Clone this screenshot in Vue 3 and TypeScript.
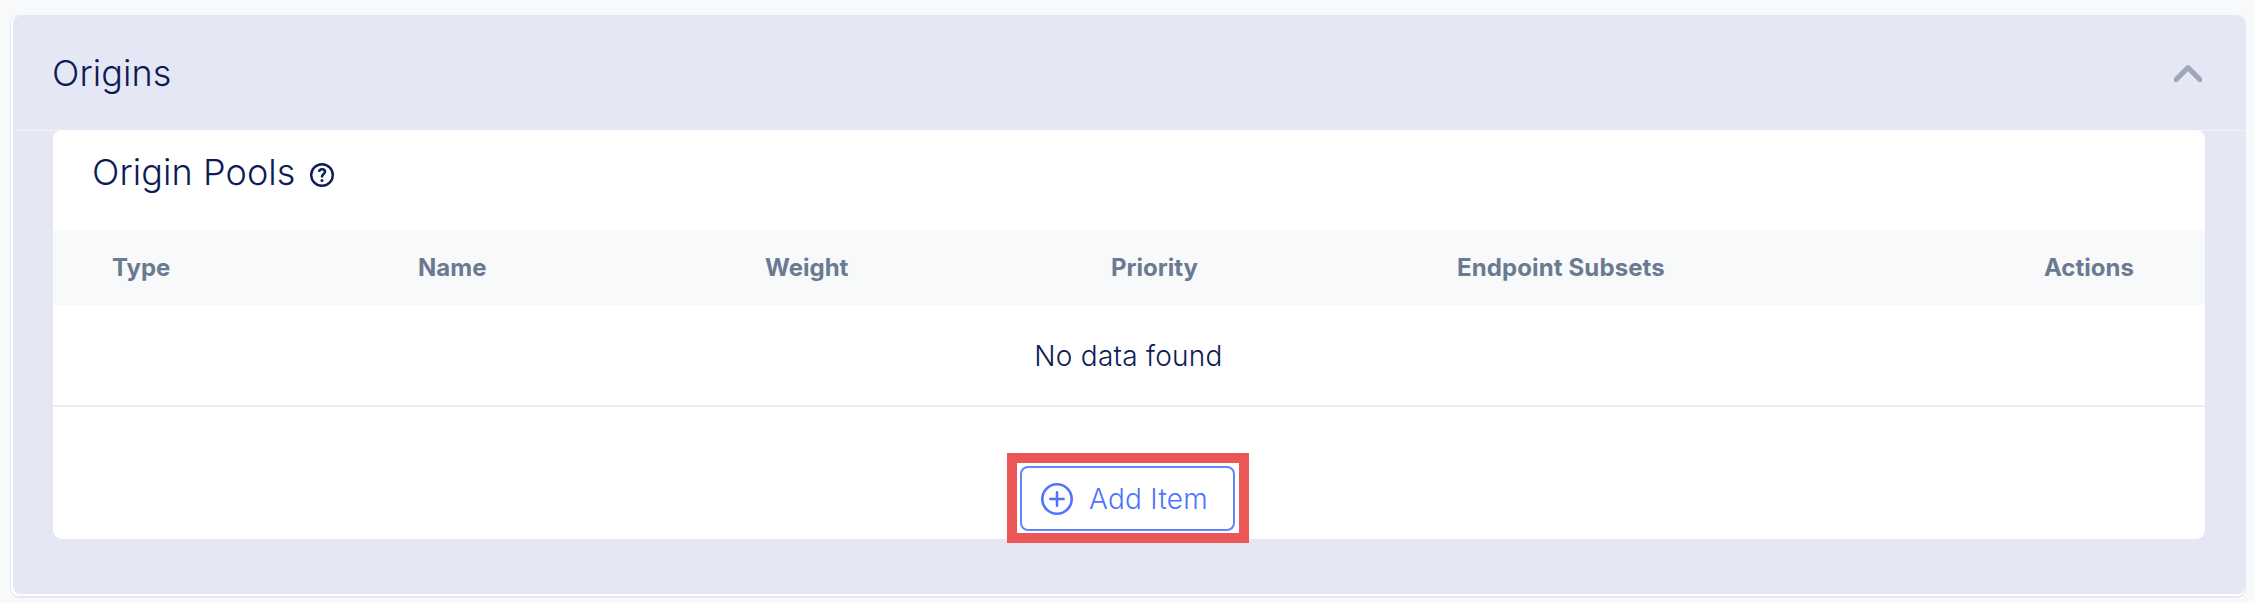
<script setup lang="ts">
interface Column {
  key: string
  label: string
}

const columns: Column[] = [
  { key: 'type', label: 'Type' },
  { key: 'name', label: 'Name' },
  { key: 'weight', label: 'Weight' },
  { key: 'priority', label: 'Priority' },
  { key: 'subsets', label: 'Endpoint Subsets' },
  { key: 'actions', label: 'Actions' },
]
</script>

<template>
  <main class="page">
    <section class="card">
      <div class="card-inner">
        <header class="card-header">
          <h2 class="title"><span>Origins</span></h2>
          <svg class="chevron" viewBox="0 0 28 18" aria-hidden="true">
            <path d="M0 13 L12.2 .8 Q14 -.6 15.8 .8 L28 13 V17 H24.8 L14 6.2 L3.2 17 H0 Z" fill="#9ea8ba" />
          </svg>
        </header>
        <div class="panel">
          <div class="panel-header">
            <h3 class="title"><span>Origin Pools</span></h3>
            <svg class="help" viewBox="0 0 24 24" fill="none" stroke="#0e1c56" aria-hidden="true">
              <circle cx="12" cy="12" r="10.8" stroke-width="2.4" />
              <path d="M9.1 8.8 C9.3 7 10.5 6.2 12 6.2 C13.8 6.2 15 7.1 15 8.8 C15 10.9 12 11 12 13.6 V14.4" stroke-width="2.5" />
              <circle cx="12" cy="17.4" r="1.5" fill="#0e1c56" stroke="none" />
            </svg>
          </div>
          <div class="table-head">
            <div v-for="c in columns" :key="c.key" :class="['cell', c.key]"><span>{{ c.label }}</span></div>
          </div>
          <div class="empty"><span>No data found</span></div>
          <div class="footer">
            <div class="highlight">
              <button class="add" type="button">
                <svg class="plus" viewBox="0 0 32 32" fill="none" stroke="#4f73ff" stroke-linecap="round" aria-hidden="true">
                  <circle cx="16" cy="16" r="14.7" stroke-width="2.6" />
                  <path d="M16 9.3 V22.7 M9.3 16 H22.7" stroke-width="2.5" />
                </svg>
                <span>Add Item</span>
              </button>
            </div>
          </div>
        </div>
      </div>
    </section>
  </main>
</template>

<style>
body {
  margin: 0;
  background: #f7f9fb;
}
</style>

<style scoped>
.page {
  box-sizing: border-box;
  width: 2255px;
  height: 603px;
  padding: 15px 9px 5px 10px;
  background: #f7f9fb;
  color: #0e1c56;
  font-family: Inter, "Liberation Sans", sans-serif;
  overflow: hidden;
}
.card {
  box-sizing: border-box;
  width: 2236px;
  height: 583px;
  padding: 0 0 2px 2px;
  border: 1px solid #e5e8f4;
  border-bottom-width: 2px;
  border-radius: 9px;
  background: #fff;
}
.card-inner {
  box-sizing: border-box;
  height: 578px;
  border-radius: 7px;
  background: #e5e8f4;
}
.card-header {
  box-sizing: border-box;
  height: 115px;
  padding: 0 43px 0 39px;
  border-bottom: 1px solid #f0f3f8;
  display: flex;
  align-items: center;
  justify-content: space-between;
}
.title {
  margin: 0;
  font-size: 36px;
  line-height: 44px;
  font-weight: 330;
  letter-spacing: 0.08px;
}
.chevron {
  width: 28px;
  height: 18px;
  margin-top: 2px;
}
.panel {
  box-sizing: border-box;
  width: 2152px;
  height: 409px;
  margin: -1px 0 0 39.5px;
  border-radius: 9px;
  background: #fff;
}
.panel-header {
  box-sizing: border-box;
  height: 100px;
  padding: 20px 0 0 39.5px;
  display: flex;
  align-items: flex-start;
  gap: 15px;
}
.help {
  width: 24px;
  height: 24px;
  margin-top: 12.5px;
}
.table-head {
  height: 75px;
  padding-left: 59.5px;
  display: grid;
  grid-template-columns: 306px 347px 346px 346px 587px 160px;
  align-items: center;
  background: #f7f9fb;
  color: #6b7991;
  font-size: 24px;
  font-weight: 700;
}
.cell.subsets {
  letter-spacing: 0.12px;
}
.empty {
  box-sizing: border-box;
  height: 102px;
  padding-top: 2px;
  border-bottom: 2px solid #eaedf5;
  display: flex;
  align-items: center;
  justify-content: center;
  font-size: 28px;
  font-weight: 330;
  letter-spacing: 0.25px;
}
.footer {
  padding-top: 46px;
  display: flex;
  justify-content: center;
}
.highlight {
  box-sizing: border-box;
  width: 242px;
  height: 90px;
  margin-left: -1px;
  padding: 3px;
  border: 10px solid #eb5757;
  background: #fff;
}
.add {
  box-sizing: border-box;
  width: 215px;
  height: 65px;
  padding: 0 0 0 19px;
  border: 2px solid #6383ff;
  border-radius: 8px;
  background: #fff;
  display: flex;
  align-items: center;
  gap: 16px;
  color: #4f73ff;
  font-family: inherit;
  font-size: 28px;
  font-weight: 330;
  letter-spacing: 0.25px;
}
.plus {
  width: 32px;
  height: 32px;
}
</style>
